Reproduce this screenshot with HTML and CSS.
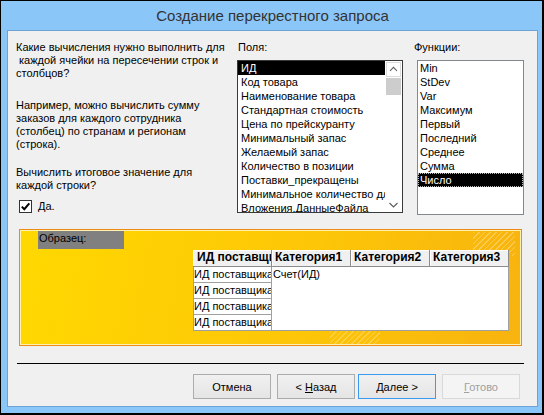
FILE: index.html
```html
<!DOCTYPE html>
<html lang="ru">
<head>
    <meta charset="UTF-8">
    <title>Создание перекрестного запроса</title>
    <link rel="stylesheet" href="styles.css">
</head>
<body>
    <div class="window">
        <div class="titlebar">Создание перекрестного запроса</div>

        <div class="client">
            <div class="top">
                <div class="intro">
                    <p class="p1">Какие вычисления нужно выполнить для<br>&nbsp;каждой ячейки на пересечении строк и<br>столбцов?</p>
                    <p class="p2">Например, можно вычислить сумму<br>заказов для каждого сотрудника<br>(столбец) по странам и регионам<br>(строка).</p>
                    <p class="p3">Вычислить итоговое значение для<br>каждой строки?</p>
                    <div class="check">
                        <span class="box">
                            <svg width="11" height="11" viewBox="0 0 11 11"><path d="M1.8 5.6 L4.3 8.2 L9.3 2.4" fill="none" stroke="#000" stroke-width="2"/></svg>
                        </span>
                        <span><u>Д</u>а.</span>
                    </div>
                </div>

                <div class="fields">
                    <div class="label">Поля:</div>
                    <div class="listbox fields-list">
                        <ul class="items">
                            <li class="selected">ИД</li>
                            <li>Код товара</li>
                            <li>Наименование товара</li>
                            <li>Стандартная стоимость</li>
                            <li>Цена по прейскуранту</li>
                            <li>Минимальный запас</li>
                            <li>Желаемый запас</li>
                            <li>Количество в позиции</li>
                            <li>Поставки_прекращены</li>
                            <li>Минимальное количество для заказа</li>
                            <li>Вложения.ДанныеФайла</li>
                        </ul>
                        <div class="scrollbar">
                            <div class="sb-btn sb-up">
                                <svg width="15" height="13" viewBox="0 0 15 13"><path d="M3.5 8 L7.5 4 L11.5 8" fill="none" stroke="#606060" stroke-width="1.2"/></svg>
                            </div>
                            <div class="sb-thumb"></div>
                            <div class="sb-track"></div>
                            <div class="sb-btn">
                                <svg width="15" height="13" viewBox="0 0 15 13"><path d="M3.5 5 L7.5 9 L11.5 5" fill="none" stroke="#606060" stroke-width="1.2"/></svg>
                            </div>
                        </div>
                    </div>
                </div>

                <div class="funcs">
                    <div class="label">Функции:</div>
                    <div class="listbox funcs-list">
                        <ul class="items">
                            <li>Min</li>
                            <li>StDev</li>
                            <li>Var</li>
                            <li>Максимум</li>
                            <li>Первый</li>
                            <li>Последний</li>
                            <li>Среднее</li>
                            <li>Сумма</li>
                            <li class="selected focus">Число</li>
                        </ul>
                    </div>
                </div>
            </div>

            <div class="sample">
                <div class="sample-label">Образец:</div>
                <div class="grid">
                    <div class="th">ИД поставщика</div>
                    <div class="th">Категория1</div>
                    <div class="th">Категория2</div>
                    <div class="th">Категория3</div>
                    <div class="td">ИД поставщика1</div>
                    <div class="cells">Счет(ИД)</div>
                    <div class="td">ИД поставщика2</div>
                    <div class="td">ИД поставщика3</div>
                    <div class="td">ИД поставщика4</div>
                </div>
            </div>

            <div class="sep"></div>

            <div class="buttons">
                <button class="btn">Отмена</button>
                <button class="btn btn-back">&lt; <u>Н</u>азад</button>
                <button class="btn btn-default"><u>Д</u>алее &gt;</button>
                <button class="btn" disabled><u>Г</u>отово</button>
            </div>
        </div>
    </div>
</body>
</html>
```

FILE: styles.css
```css
* {
    margin: 0;
    padding: 0;
    box-sizing: border-box;
}

body {
    font-family: 'Liberation Sans', Arial, sans-serif;
    font-size: 11px;
    color: #000;
    background: #fff;
}

.window {
    width: 544px;
    height: 415px;
    border-style: solid;
    border-color: #000;
    border-width: 1px 2px 2px 1px;
    background: #8bc6f8;
    padding: 0 4px 6px 6px;
    display: flex;
    flex-direction: column;
}

.titlebar {
    height: 29px;
    padding-top: 1px;
    line-height: 28px;
    text-align: center;
    font-size: 15px;
    color: #333;
}

.client {
    flex: 1;
    background: #f0f0f0;
    border: 1px solid #6fa3d8;
    padding: 10px 0 0 8px;
}

/* upper part: text, fields and functions */
.top {
    display: flex;
}

.intro {
    width: 221px;
    line-height: 13px;
    white-space: nowrap;
}

.p2 {
    margin-top: 19px;
}

.p3 {
    margin-top: 15px;
}

.check {
    margin: 8px 0 0 3px;
    display: flex;
    align-items: center;
    gap: 6px;
    height: 13px;
}

.check .box {
    width: 13px;
    height: 13px;
    border: 1px solid #333;
    background: #fff;
    display: flex;
}

.label {
    line-height: 13px;
}

.fields {
    width: 166px;
    margin-right: 14px;
}

.fields .label {
    margin: 0 0 6px 1px;
}

.funcs {
    width: 107px;
}

.funcs .label {
    margin: 0 0 6px -3px;
}

.listbox {
    background: #fff;
    display: flex;
    overflow: hidden;
}

.fields-list {
    height: 153px;
    border: 1px solid #3a3a3a;
}

.funcs-list {
    height: 155px;
    border: 1px solid #828790;
}

.items {
    list-style: none;
    flex: 1;
    min-width: 0;
}

.items li {
    height: 14px;
    line-height: 14px;
    white-space: nowrap;
    overflow: hidden;
}

.fields-list .items li {
    padding-left: 3px;
}

.funcs-list .items li {
    padding-left: 2px;
}

.items li.selected {
    background: #000;
    color: #fff;
}

.items li.focus {
    border: 1px dotted #bbb;
    line-height: 12px;
    padding-left: 1px;
}

.scrollbar {
    width: 17px;
    display: flex;
    flex-direction: column;
    background: #fff;
}

.sb-btn {
    height: 15px;
    display: flex;
    align-items: center;
    justify-content: center;
}

.sb-up {
    border: 1px solid #dcdcdc;
    margin: 1px 1px 0 1px;
}

.sb-thumb {
    height: 17px;
    margin: 1px 1px 0 1px;
    background: #cdcdcd;
}

.sb-track {
    flex: 1;
}

/* sample preview */
.sample {
    margin: 14px 0 0 3px;
    width: 503px;
    height: 117px;
    border: 1px solid #ee8a16;
    padding: 1px 0 0 18px;
    box-shadow: inset 0 0 0 1px #fff2b0;
    background:
        repeating-linear-gradient(135deg, rgba(255, 255, 255, 0.28) 0 1px, transparent 1px 4px) right 6px top 2px / 42px 24px no-repeat,
        repeating-linear-gradient(135deg, rgba(255, 255, 255, 0.25) 0 1px, transparent 1px 4px) 310px bottom / 50px 14px no-repeat,
        linear-gradient(100deg, #ffd800 0%, #fdc707 55%, #f8b30f 100%);
}

.sample-label {
    width: 86px;
    height: 18px;
    background: #808080;
    line-height: 14px;
    padding-left: 1px;
}

.grid {
    margin: 1px 0 0 155px;
    display: grid;
    grid-template-columns: repeat(4, 79px);
    grid-template-rows: 17px repeat(4, 16px);
    line-height: 15px;
}

.th {
    background: #f0f0f0;
    border-right: 1px solid #8c8c8c;
    border-bottom: 1px solid #8c8c8c;
    box-shadow: inset 1px 1px 0 #fff;
    padding-left: 3px;
    font-size: 12px;
    font-weight: bold;
    white-space: nowrap;
    overflow: hidden;
}

.th:first-child {
    padding-left: 4px;
}

.td {
    background: #fff;
    border: solid #a0a0a0;
    border-width: 0 1px 1px 1px;
    white-space: nowrap;
    overflow: hidden;
}

.cells {
    grid-column: 2 / 5;
    grid-row: 2 / 6;
    background: #fff;
    border: solid #a0a0a0;
    border-width: 0 1px 1px 0;
    padding-left: 1px;
}

.sep {
    margin: 17px 0 0 1px;
    width: 507px;
    height: 1px;
    background: #000;
}

.buttons {
    margin: 10px 0 0 177px;
    display: flex;
}

.btn {
    width: 78px;
    height: 25px;
    font-family: inherit;
    font-size: 11px;
    color: #000;
    background: linear-gradient(to bottom, #f0f0f0, #e5e5e5);
    border: 1px solid #acacac;
    margin-right: 6px;
}

.btn-back {
    margin-right: 3px;
}

.btn-default {
    border-color: #3c9bf0;
}

.btn:disabled {
    background: #f4f4f4;
    border-color: #d9d9d9;
    color: #a0a0a0;
}
```
